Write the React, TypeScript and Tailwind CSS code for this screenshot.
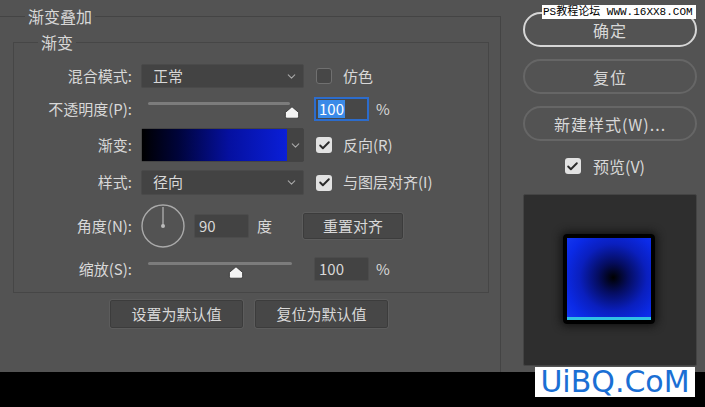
import { Check, ChevronDown } from "lucide-react";

const font = "font-['Noto_Sans_CJK_SC',sans-serif]";

function Thumb() {
  return (
    <svg width="16" height="13" viewBox="0 0 16 13">
      <path d="M8 0.8 L14.6 6.4 L14.6 10.8 Q14.6 12.2 13.2 12.2 L2.8 12.2 Q1.4 12.2 1.4 10.8 L1.4 6.4 Z" fill="#f4f4f4" stroke="#2e2e2e" strokeWidth="0.8" />
    </svg>
  );
}

function Box({ checked }: { checked: boolean }) {
  return checked ? (
    <div className="flex h-[16px] w-[16px] items-center justify-center rounded-[3px] bg-[#e2e2e2]">
      <Check size={13} strokeWidth={3.5} className="text-[#2a2a2a]" />
    </div>
  ) : (
    <div className="h-[16px] w-[16px] rounded-[3px] border border-[#707070] bg-[#474747]" />
  );
}

function Select({ value }: { value: string }) {
  return (
    <div className="flex h-full w-[163px] items-center justify-between rounded-[2px] border border-[#4a4a4a] bg-[#434343] pl-[11px] pr-[5px]">
      <span>{value}</span>
      <ChevronDown size={13} strokeWidth={2} className="text-[#a8a8a8]" />
    </div>
  );
}

function Slider({ at, end }: { at: number; end: number }) {
  return (
    <div className="relative h-full w-[163px]">
      <div className="absolute left-[7px] top-[5px] h-[3px] rounded-full bg-[#7c7c7c]" style={{ width: end }} />
      <div className="absolute top-[9px]" style={{ left: at - 8 }}>
        <Thumb />
      </div>
    </div>
  );
}

function Row({ label, h, mt, children }: { label: string; h: number; mt: number; children: React.ReactNode }) {
  return (
    <div className="flex items-center" style={{ height: h, marginTop: mt }}>
      <div className="w-[118px] text-right">{label}</div>
      <div className="ml-[9px] flex h-full items-center">{children}</div>
    </div>
  );
}

function Field({ value, focus }: { value: string; focus?: boolean }) {
  return focus ? (
    <div className="flex h-[24px] w-[55px] items-center border-2 border-[#2c6ccc] bg-[#474747] pl-[2px]">
      <span className="bg-[#3a8ae8] px-[1px] leading-[18px] text-white">{value}</span>
    </div>
  ) : (
    <div className="flex h-[24px] w-[55px] items-center rounded-[2px] border border-[#4c4c4c] bg-[#434343] pl-[4px]">{value}</div>
  );
}

export default function App() {
  return (
    <div className={`flex h-[407px] w-[705px] flex-col bg-black text-[15px] text-[#d8d8d8] ${font}`}>
      <div className="relative flex h-[372px] bg-[#535353]">
        {/* layer style panel */}
        <div className="w-[501px] overflow-hidden">
          <div className="relative mt-[16px] h-[360px] border-r border-t border-[#444444]">
            <span className="absolute left-[25px] top-[-13px] bg-[#535353] px-[3px] text-[16px] leading-[24px]">渐变叠加</span>

            <div className="relative ml-[13px] mt-[25px] h-[251px] w-[476px] border border-[#464646] pt-[21px]">
              <span className="absolute left-[24px] top-[-13px] bg-[#535353] px-[3px] text-[16px] leading-[24px]">渐变</span>

              <Row label="混合模式:" h={24} mt={0}>
                <Select value="正常" />
                <div className="ml-[12px]"><Box checked={false} /></div>
                <span className="ml-[11px]">仿色</span>
              </Row>

              <Row label="不透明度(P):" h={24} mt={9}>
                <Slider at={151} end={142} />
                <div className="ml-[10px]"><Field value="100" focus /></div>
                <span className="ml-[7px]">%</span>
              </Row>

              <Row label="渐变:" h={34} mt={7}>
                <div className="flex h-full w-[163px] rounded-[2px] border border-[#444] bg-[#434343]">
                  <div className="h-full w-[145px] bg-[linear-gradient(90deg,#000_0%,#00043a_25%,#0510a0_60%,#0a1fd8_100%)]" />
                  <div className="flex flex-1 items-center justify-center">
                    <ChevronDown size={13} strokeWidth={2} className="text-[#a8a8a8]" />
                  </div>
                </div>
                <div className="ml-[12px]"><Box checked /></div>
                <span className="ml-[11px]">反向(R)</span>
              </Row>

              <Row label="样式:" h={25} mt={8}>
                <Select value="径向" />
                <div className="ml-[12px]"><Box checked /></div>
                <span className="ml-[11px]">与图层对齐(I)</span>
              </Row>

              <Row label="角度(N):" h={44} mt={9}>
                <svg width="44" height="44" viewBox="0 0 44 44">
                  <circle cx="22" cy="22" r="21" fill="none" stroke="#aaaaaa" strokeWidth="1.4" />
                  <line x1="22" y1="3" x2="22" y2="22" stroke="#aaaaaa" strokeWidth="1.4" />
                  <circle cx="22" cy="22" r="2" fill="#bbbbbb" />
                </svg>
                <div className="ml-[9px]"><Field value="90" /></div>
                <span className="ml-[8px]">度</span>
                <div className="ml-[31px] flex h-[26px] w-[100px] items-center justify-center rounded-[2px] border border-[#3c3c3c] bg-[#474747] outline outline-1 outline-[#5c5c5c]">
                  重置对齐
                </div>
              </Row>

              <Row label="缩放(S):" h={24} mt={9}>
                <Slider at={95} end={144} />
                <div className="ml-[10px]"><Field value="100" /></div>
                <span className="ml-[7px]">%</span>
              </Row>
            </div>

            <div className="mt-[7px] flex gap-[12px] pl-[110px]">
              <div className="flex h-[28px] w-[133px] items-center justify-center rounded-[2px] border border-[#3c3c3c] bg-[#474747] outline outline-1 outline-[#5c5c5c]">设置为默认值</div>
              <div className="flex h-[28px] w-[133px] items-center justify-center rounded-[2px] border border-[#3c3c3c] bg-[#474747] outline outline-1 outline-[#5c5c5c]">复位为默认值</div>
            </div>
          </div>
        </div>

        {/* right column */}
        <div className="ml-[22px] flex w-[174px] flex-col pt-[12px] text-[16px]">
          <div className="flex h-[35px] items-center justify-center rounded-full border-2 border-[#d6d6d6] tracking-[1px]">确定</div>
          <div className="mt-[12px] flex h-[35px] items-center justify-center rounded-full border-2 border-[#666666] tracking-[1px]">复位</div>
          <div className="mt-[12px] flex h-[35px] items-center justify-center rounded-full border-2 border-[#666666] tracking-[1px]">新建样式(W)...</div>
          <div className="mt-[13px] flex items-center justify-center gap-[12px] pr-[10px]">
            <Box checked />
            <span>预览(V)</span>
          </div>
          <div className="mt-[16px] flex h-[172px] items-center justify-center rounded-[2px] border border-[#444] bg-[#2e2e2e]">
            <div className="mb-[3px] ml-[-3px] h-[90px] w-[92px] rounded-[4px] border-[4px] border-black shadow-[0_0_8px_2px_#111]">
              <div className="h-full w-full border-b-[3px] border-[#30c0e4] bg-[radial-gradient(circle_at_55%_50%,#000_0%,#050d60_25%,#0a1fbe_55%,#0b2ae6_80%,#1336f0_100%)]" />
            </div>
          </div>
        </div>

        {/* watermark */}
        <div className="absolute left-[542px] top-[5px] h-[14px] bg-white pl-[1px] pr-[3px] font-['Liberation_Mono','Noto_Sans_CJK_SC',monospace] text-[11px] leading-[14px] text-black">
          PS教程论坛 WWW.16XX8.COM
        </div>
      </div>
      <div className="relative h-[35px]">
        <div className="absolute left-[535px] top-[-5px] flex h-[30px] w-[160px] items-center justify-center bg-white font-['DejaVu_Sans',sans-serif] text-[30px] leading-none text-[#1a6fd4]">
          UiBQ.CoM
        </div>
      </div>
    </div>
  );
}
